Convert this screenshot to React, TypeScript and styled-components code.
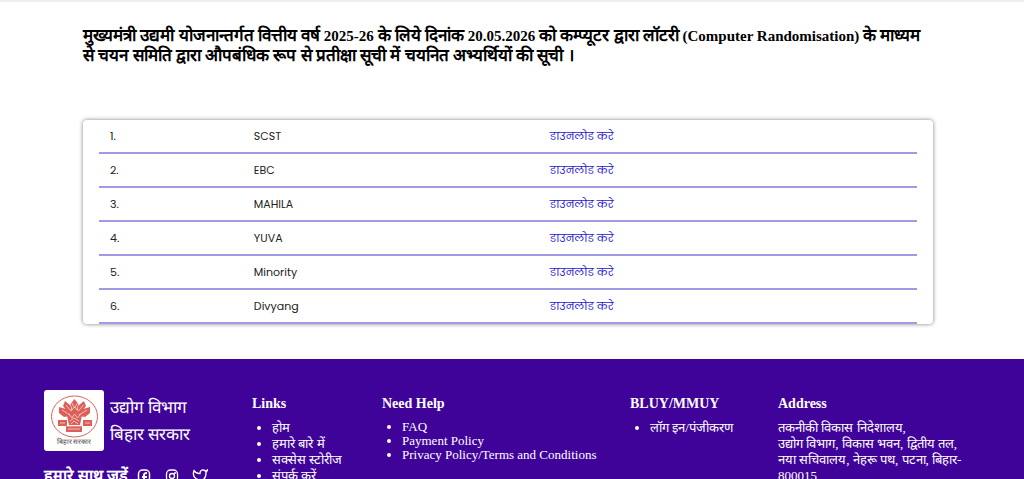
import React from 'react';
import styled, { createGlobalStyle } from 'styled-components';

const GlobalStyle = createGlobalStyle`
  * { box-sizing: border-box; }
  body {
    margin: 0;
    background: #fff;
    color: #000;
    font-family: "Liberation Serif", "Times New Roman", serif;
  }
`;

const Main = styled.main`
  border-top: 2px solid #f0f0f0;
  padding: 24px 91px 35px 83px;
`;

const Title = styled.h1`
  margin: 0 0 54px;
  font-size: 15px;
  line-height: 20px;
  font-weight: 700;
`;

const Hindi = styled.span`
  font-size: 17px;
`;

const Card = styled.section`
  padding: 0 16px;
  border-radius: 4px;
  box-shadow: 0 0 4px rgba(0, 0, 0, 0.5);
`;

const ListTable = styled.table`
  width: 100%;
  table-layout: fixed;
  border-collapse: separate;
  border-spacing: 0;
  color: #222;
  font-family: Poppins, "Noto Sans", sans-serif;
  font-size: 11px;
  line-height: 16px;
`;

const Cell = styled.td<{ $width: string }>`
  width: ${(p) => p.$width};
  height: 34px;
  padding: 0 0 0 11px;
  border-bottom: 2px solid #a09ce4;
`;

const Download = styled.a`
  color: #2a22d0;
  text-decoration: none;
`;

const Footer = styled.footer`
  display: grid;
  grid-template-columns: 208fr 130fr 248fr 148fr 203fr;
  padding: 31px 43px 24px 44px;
  background: #40039a;
  color: #fff;
`;

const Brand = styled.div`
  display: flex;
  align-items: center;
  gap: 6px;
`;

const Emblem = styled.svg`
  width: 60px;
  height: 61px;
`;

const BrandName = styled.div`
  font-size: 17px;
  line-height: 27px;
`;

const Social = styled.div`
  display: flex;
  align-items: center;
  gap: 8px;
  margin-top: 14px;
`;

const SocialIcons = styled.div`
  display: flex;
  gap: 12px;
`;

const SocialTitle = styled.h2`
  margin: 0;
  font-size: 16px;
  line-height: 22px;
`;

const SocialLink = styled.a`
  display: flex;
  color: #fff;
  svg { width: 16px; height: 16px; }
`;

const Heading = styled.h2`
  margin: 6px 0 8px;
  font-size: 14px;
  line-height: 16px;
`;

const Links = styled.ul<{ $line: number }>`
  margin: 0;
  padding-left: 20px;
  font-size: 13px;
  line-height: ${(p) => p.$line}px;
`;

const FooterLink = styled.a`
  color: #fff;
  text-decoration: none;
`;

const Address = styled.address`
  font-style: normal;
  font-size: 13px;
  line-height: 16px;
`;

const rows = ['SCST', 'EBC', 'MAHILA', 'YUVA', 'Minority', 'Divyang'];

const EmblemMark = () => (
  <Emblem viewBox="0 0 60 61" role="img" aria-label="बिहार सरकार">
    <rect width="60" height="61" rx="3" fill="#fff" />
    <ellipse cx="30.500" cy="26.500" rx="23" ry="20.500" fill="none" stroke="#d9635c" />
    <g fill="#dc6059">
      <path d="M30.500 9l4 5-2 6h-4l-2-6z" />
      <path d="M21 11l6 5 1 7-5-2-4-5zM40 11l-6 5-1 7 5-2 4-5z" />
      <path d="M15 17l7 2 4 7-6 1-5-4zM46 17l-7 2-4 7 6 1 5-4z" />
      <path d="M22 20h17l-3 15H25z" />
      <path d="M14 30h9v6h-9zM39 30h9v6h-9zM22 36h16v6H22z" />
    </g>
    <g fill="none" stroke="#f8d8d4" strokeWidth=".8">
      <path d="M28 13l2.500 5 3-5M22 15l5 6 3.500-4 4 4 5-6M18 20l8 5M43 20l-8 5" />
      <path d="M25 24l3 4 2.500-4 3 4 3-4M26 31l4-3 5 3M27 34l3-3 4 3" />
      <path d="M16 33h5M41 33h5M24 39h12M22 36h16" />
    </g>
    <text x="30" y="54" textAnchor="middle" fontSize="7" fill="#444">बिहार सरकार</text>
  </Emblem>
);

export default function App() {
  return (
    <>
      <GlobalStyle />
      <Main>
        <Title>
          <Hindi>मुख्यमंत्री उद्यमी योजनान्तर्गत वित्तीय वर्ष</Hindi> 2025-26 <Hindi>के लिये दिनांक</Hindi> 20.05.2026{' '}
          <Hindi>को कम्प्यूटर द्वारा लॉटरी</Hindi> (Computer Randomisation){' '}
          <Hindi>के माध्यम से चयन समिति द्वारा औपबंधिक रूप से प्रतीक्षा सूची में चयनित अभ्यर्थियों की सूची ।</Hindi>
        </Title>
        <Card>
          <ListTable>
            <tbody>
              {rows.map((name, i) => (
                <tr key={name}>
                  <Cell $width="17.500%">{i + 1}.</Cell>
                  <Cell $width="36%">{name}</Cell>
                  <Cell $width="46%">
                    <Download href="#">डाउनलोड करे</Download>
                  </Cell>
                </tr>
              ))}
            </tbody>
          </ListTable>
        </Card>
      </Main>
      <Footer>
        <div>
          <Brand>
            <EmblemMark />
            <BrandName>
              उद्योग विभाग
              <br />
              बिहार सरकार
            </BrandName>
          </Brand>
          <Social>
            <SocialTitle>हमारे साथ जुड़ें</SocialTitle>
            <SocialIcons>
              <SocialLink href="#" aria-label="Facebook">
                <svg viewBox="0 0 16 16" fill="none" stroke="currentColor" strokeWidth="1.500">
                  <rect x="2.500" y="2" width="11" height="12" rx="4" />
                  <path d="M8 14V7q0-2 3-2M6 9h5" strokeWidth="2" />
                </svg>
              </SocialLink>
              <SocialLink href="#" aria-label="Instagram">
                <svg viewBox="0 0 16 16" fill="none" stroke="currentColor" strokeWidth="1.300">
                  <rect x="2.500" y="2" width="11" height="12" rx="4" />
                  <circle cx="8" cy="8" r="2.500" />
                  <circle cx="11" cy="5" r=".4" />
                </svg>
              </SocialLink>
              <SocialLink href="#" aria-label="Twitter">
                <svg viewBox="0 0 24 24" fill="none" stroke="currentColor" strokeWidth="2">
                  <path d="M23 3a10.900 10.900 0 0 1-3.140 1.530 4.480 4.480 0 0 0-7.860 3v1A10.660 10.660 0 0 1 3 4s-4 9 5 13a11.640 11.640 0 0 1-7 2c9 5 20 0 20-11.500a4.500 4.500 0 0 0-.08-.83A7.720 7.720 0 0 0 23 3z" />
                </svg>
              </SocialLink>
            </SocialIcons>
          </Social>
        </div>
        <nav aria-label="Links">
          <Heading>Links</Heading>
          <Links $line={16}>
            {['होम', 'हमारे बारे में', 'सक्सेस स्टोरीज', 'संपर्क करें'].map((t) => (
              <li key={t}>
                <FooterLink href="#">{t}</FooterLink>
              </li>
            ))}
          </Links>
        </nav>
        <nav aria-label="Need Help">
          <Heading>Need Help</Heading>
          <Links $line={14}>
            {['FAQ', 'Payment Policy', 'Privacy Policy/Terms and Conditions'].map((t) => (
              <li key={t}>
                <FooterLink href="#">{t}</FooterLink>
              </li>
            ))}
          </Links>
        </nav>
        <nav aria-label="BLUY/MMUY">
          <Heading>BLUY/MMUY</Heading>
          <Links $line={16}>
            <li>
              <FooterLink href="#">लॉग इन/पंजीकरण</FooterLink>
            </li>
          </Links>
        </nav>
        <div>
          <Heading>Address</Heading>
          <Address>
            तकनीकी विकास निदेशालय,
            <br />
            उद्योग विभाग, विकास भवन, द्वितीय तल,
            <br />
            नया सचिवालय, नेहरू पथ, पटना, बिहार-
            <br />
            800015
          </Address>
        </div>
      </Footer>
    </>
  );
}
